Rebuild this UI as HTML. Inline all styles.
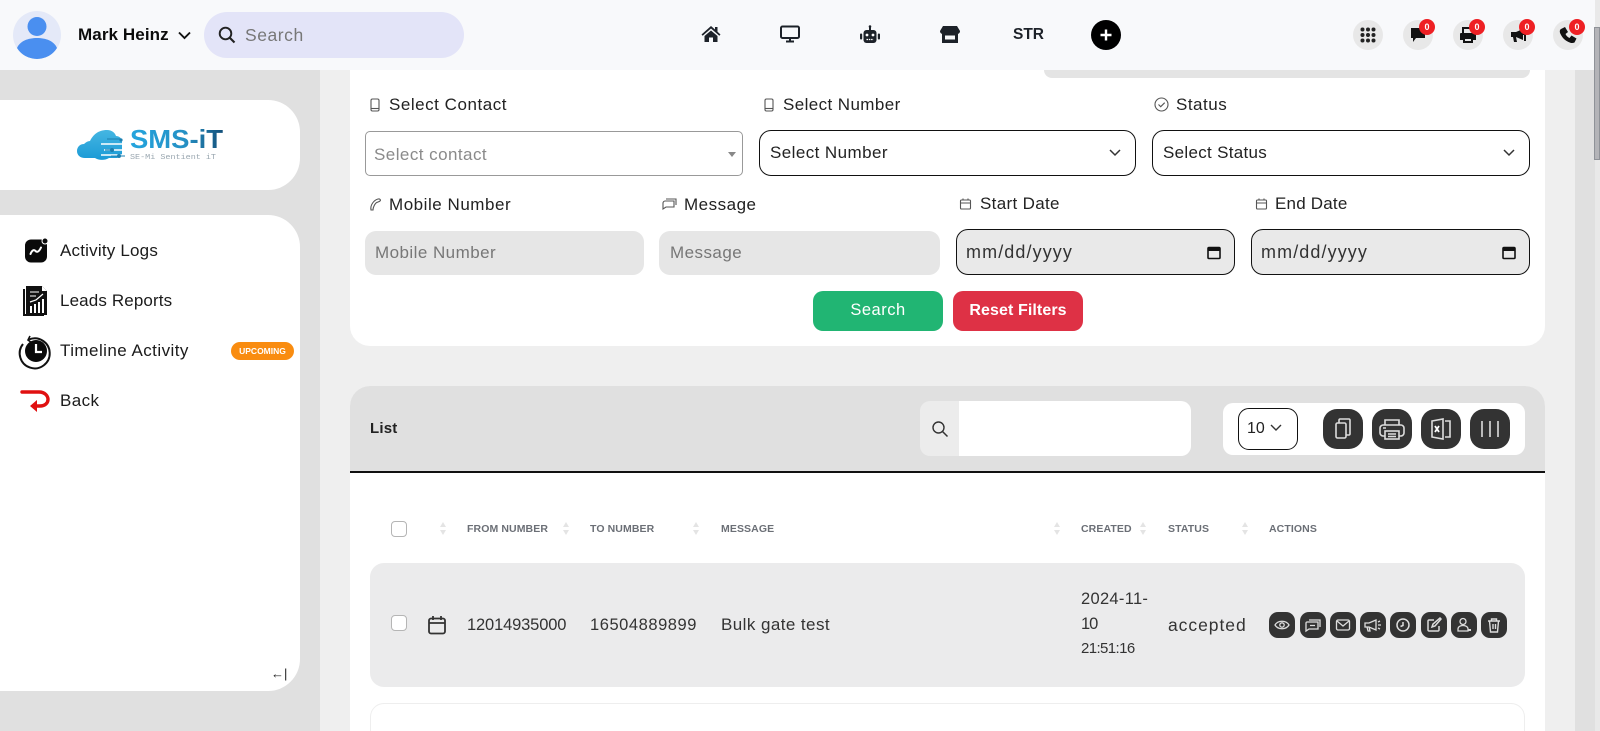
<!DOCTYPE html>
<html lang="en"><head><meta charset="utf-8"><title>Activity Logs</title>
<style>
*{box-sizing:border-box}
html,body{margin:0;padding:0;width:1600px;height:731px;overflow:hidden;background:#efefef;font-family:"Liberation Sans",sans-serif;color:#222}
body{position:relative}
.a{position:absolute}
.t{position:absolute;white-space:nowrap;line-height:20px;height:20px}
svg{display:block;overflow:visible}
.lbl{font-size:17px;letter-spacing:.5px;color:#222}
.sm{position:absolute;fill:none;stroke:#555;stroke-width:1.1}
.box{position:absolute;border:1.5px solid #111;border-radius:12px}
.fld{position:absolute;background:#e6e6e6;border-radius:11px;border:0;padding:0 10px;font:17px "Liberation Sans",sans-serif;letter-spacing:.45px;color:#777}
.fld::placeholder{color:#777;opacity:1}
.th{position:absolute;top:519px;font-size:10.5px;font-weight:bold;color:#6b6f76;line-height:20px;letter-spacing:.1px;white-space:nowrap}
.sort{position:absolute;top:521px;width:8px;height:15px}
.td{position:absolute;font-size:16.5px;color:#333;line-height:20px;white-space:nowrap}
.cb{position:absolute;width:16px;height:16px;border:1px solid #b5b5b5;border-radius:4px;background:#fff}
.tb{position:absolute;top:409px;width:40px;height:40px;background:#333;border-radius:14px}
.ab{position:absolute;top:612px;width:26px;height:26px;background:#333;border-radius:9px}
.hc{position:absolute;top:20px;width:30px;height:30px;border-radius:50%;background:#e8e8e8}
.bd{position:absolute;top:19px;width:16px;height:16px;border-radius:50%;background:#ee2024;color:#fff;font-size:9px;font-weight:bold;text-align:center;line-height:16px}
.m{position:absolute;left:60px;font-size:17px;color:#1b1b1b;line-height:20px;white-space:nowrap}
</style></head><body>

<!-- page backgrounds -->
<div class="a" style="left:0;top:70px;width:320px;height:661px;background:#e0e0e0"></div>
<div class="a" style="left:1575px;top:70px;width:20px;height:661px;background:#e0e0e0"></div>

<!-- sidebar -->
<div class="a" style="left:0;top:100px;width:300px;height:90px;background:#fff;border-radius:0 32px 32px 0"></div>
<svg class="a" style="left:77px;top:130px" width="150" height="32" viewBox="0 0 150 32">
<defs><linearGradient id="cl" x1="0" y1="0" x2="0" y2="1"><stop offset="0" stop-color="#45b6e2"/><stop offset="1" stop-color="#1b9ad6"/></linearGradient>
<linearGradient id="lg" x1="0" y1="0" x2="1" y2="0"><stop offset="0" stop-color="#25a5de"/><stop offset=".6" stop-color="#2590c4"/><stop offset="1" stop-color="#14507a"/></linearGradient></defs>
<path d="M0 21c0-4 3-7 7-7 2-2 4-3 6-3 3-6 8-11 17-11 5 0 8 3 9 6 3 0 6 2 6 6v14l-5 2H32c-5 3-11 2-14 0H8c-5 0-8-3-8-7z" fill="url(#cl)"/>
<path d="M24 14h26M27 20h23M24 25h26" stroke="#fff" stroke-width="1.400"/>
<path d="M30 9h14M28 20h6M34 26h14" stroke="#1d7fb0" stroke-width="1"/>
<circle cx="35" cy="20" r="2" fill="#1d7fb0"/><circle cx="42" cy="26" r="2" fill="#1d7fb0"/><circle cx="44" cy="10" r="1.600" fill="#1d7fb0"/>
<text x="53" y="18" font-family="Liberation Sans,sans-serif" font-weight="bold" font-size="26" fill="url(#lg)" textLength="93" lengthAdjust="spacingAndGlyphs">SMS-iT</text>
<text x="53" y="29" font-family="Liberation Mono,monospace" font-size="7" fill="#9aa7b0" textLength="86" lengthAdjust="spacingAndGlyphs">SE-Mi Sentient iT</text>
</svg>

<div class="a" style="left:0;top:215px;width:300px;height:476px;background:#fff;border-radius:0 32px 32px 0"></div>
<svg class="a" style="left:24px;top:238px" width="24" height="26" viewBox="0 0 24 26"><rect x="1" y="1.500" width="22" height="23" rx="6" fill="#0a0a0a"/><circle cx="21" cy="3" r="3" fill="#0a0a0a" stroke="#fff" stroke-width="1"/><path d="M6.500 16c2-5 4-4 5-3s3 2 5.500-3.500" fill="none" stroke="#fff" stroke-width="2" stroke-linecap="round"/></svg>
<div class="m" style="top:241px;letter-spacing:.2px">Activity Logs</div>
<svg class="a" style="left:23px;top:285px" width="26" height="32" viewBox="0 0 26 32"><path d="M1 4v26h20" fill="none" stroke="#111" stroke-width="2"/><path d="M3 1h16l5 5v24H3z" fill="#111"/><path d="M19 1v5h5" fill="#fff"/><path d="M7 7h9M7 11h6" stroke="#fff" stroke-width="1"/><path d="M7 17l6-2 7-6" fill="none" stroke="#fff" stroke-width="1.200"/><path d="M7 21h2v7H7zM11 19h2v9h-2zM15 17h2v11h-2zM19 14h2v14h-2z" fill="#fff"/></svg>
<div class="m" style="top:291px;letter-spacing:.13px">Leads Reports</div>
<svg class="a" style="left:20px;top:334px" width="32" height="34" viewBox="0 0 32 34"><path d="M9 5.500A15 15 0 1 1 3 10" fill="none" stroke="#111" stroke-width="2"/><path d="M10 2l-2 4 4 3" fill="none" stroke="#111" stroke-width="1.600"/><circle cx="16" cy="17" r="11" fill="#0a0a0a"/><path d="M16 10v8h6" fill="none" stroke="#fff" stroke-width="2.200"/></svg>
<div class="m" style="top:341px;letter-spacing:.45px">Timeline Activity</div>
<div class="a" style="left:231px;top:342px;width:63px;height:18px;border-radius:9px;background:#f98c10;color:#fff;font-size:8.500px;font-weight:bold;text-align:center;line-height:18px">UPCOMING</div>
<svg class="a" style="left:21px;top:388px" width="30" height="25" viewBox="0 0 30 25"><path d="M1 4h17c6 0 9 4 9 7.500s-3 6.500-8 6.500h-6" fill="none" stroke="#e01010" stroke-width="3.400" stroke-linecap="round"/><path d="M16 12l-7 6 7 6z" fill="#e01010"/></svg>
<div class="m" style="top:391px;letter-spacing:.4px">Back</div>
<div class="t" style="left:271px;top:664px;font-size:13px;color:#222">←|</div>

<!-- filter card -->
<div class="a" style="left:350px;top:70px;width:1195px;height:276px;background:#fff;border-radius:0 0 20px 20px"></div>
<div class="a" style="left:1044px;top:70px;width:486px;height:8px;background:#e4e4e4;border-radius:0 0 14px 14px"></div>

<svg class="sm" style="left:369px;top:98px" width="12" height="14" viewBox="0 0 12 14"><rect x="2" y="1" width="8" height="12" rx="1.500"/><path d="M2 10.500h8"/></svg>
<div class="t lbl" style="left:389px;top:95px;letter-spacing:.53px">Select Contact</div>
<svg class="sm" style="left:763px;top:98px" width="12" height="14" viewBox="0 0 12 14"><rect x="2" y="1" width="8" height="12" rx="1.500"/><path d="M2 10.500h8"/></svg>
<div class="t lbl" style="left:783px;top:95px;letter-spacing:.4px">Select Number</div>
<svg class="sm" style="left:1154px;top:97px" width="15" height="15" viewBox="0 0 15 15"><circle cx="7.500" cy="7.500" r="6.500"/><path d="M4.500 7.500l2.200 2.200 4-4"/></svg>
<div class="t lbl" style="left:1176px;top:95px">Status</div>

<div class="a" style="left:365px;top:131px;width:378px;height:45px;border:1px solid #999;border-radius:5px"></div>
<div class="t" style="left:374px;top:145px;font-size:17px;letter-spacing:.45px;color:#8a8a8a">Select contact</div>
<div class="a" style="left:728px;top:152px;width:0;height:0;border-left:4px solid transparent;border-right:4px solid transparent;border-top:5px solid #888"></div>

<div class="box" style="left:759px;top:130px;width:377px;height:46px"></div>
<div class="t" style="left:770px;top:143px;font-size:17px;letter-spacing:.42px;color:#222">Select Number</div>
<svg class="a" style="left:1108px;top:148px" width="14" height="10" viewBox="0 0 14 10"><path d="M2 2l5 5 5-5" fill="none" stroke="#333" stroke-width="1.500"/></svg>
<div class="box" style="left:1152px;top:130px;width:378px;height:46px"></div>
<div class="t" style="left:1163px;top:143px;font-size:17px;letter-spacing:.3px;color:#222">Select Status</div>
<svg class="a" style="left:1502px;top:148px" width="14" height="10" viewBox="0 0 14 10"><path d="M2 2l5 5 5-5" fill="none" stroke="#333" stroke-width="1.500"/></svg>

<svg class="sm" style="left:369px;top:198px" width="13" height="13" viewBox="0 0 13 13"><path d="M2 12C1 7 5 2 9 1c2-.500 3 1 2 2S8 4 7 5 4 9 4 12z"/></svg>
<div class="t lbl" style="left:389px;top:195px;letter-spacing:.53px">Mobile Number</div>
<svg class="sm" style="left:662px;top:198px" width="15" height="13" viewBox="0 0 15 13"><path d="M3 3h9v6H4l-3 2V5c0-1 1-2 2-2z"/><path d="M4 1h10v6"/></svg>
<div class="t lbl" style="left:684px;top:195px">Message</div>
<svg class="sm" style="left:960px;top:198px" width="11" height="12" viewBox="0 0 11 12"><rect x=".5" y="2" width="10" height="9" rx="1"/><path d="M.5 5h10M3 .500v2M8 .500v2"/></svg>
<div class="t lbl" style="left:980px;top:194px;letter-spacing:.33px">Start Date</div>
<svg class="sm" style="left:1256px;top:198px" width="11" height="12" viewBox="0 0 11 12"><rect x=".5" y="2" width="10" height="9" rx="1"/><path d="M.5 5h10M3 .500v2M8 .500v2"/></svg>
<div class="t lbl" style="left:1275px;top:194px;letter-spacing:.2px">End Date</div>

<input class="fld" style="left:365px;top:231px;width:279px;height:44px" placeholder="Mobile Number">
<input class="fld" style="left:659px;top:231px;width:281px;height:44px;padding-left:11px" placeholder="Message">

<div class="box" style="left:956px;top:229px;width:279px;height:46px;background:#e9e9e9"></div>
<div class="t" style="left:966px;top:242px;font-size:18px;letter-spacing:1.100px;color:#333">mm/dd/yyyy</div>
<svg class="a" style="left:1206px;top:245px" width="16" height="16" viewBox="0 0 16 16"><rect x="2" y="2.500" width="12" height="11" rx="1" fill="none" stroke="#111" stroke-width="1.600"/><path d="M2 3h12v3H2z" fill="#111"/></svg>
<div class="box" style="left:1251px;top:229px;width:279px;height:46px;background:#e9e9e9"></div>
<div class="t" style="left:1261px;top:242px;font-size:18px;letter-spacing:1.100px;color:#333">mm/dd/yyyy</div>
<svg class="a" style="left:1501px;top:245px" width="16" height="16" viewBox="0 0 16 16"><rect x="2" y="2.500" width="12" height="11" rx="1" fill="none" stroke="#111" stroke-width="1.600"/><path d="M2 3h12v3H2z" fill="#111"/></svg>

<div class="a" style="left:813px;top:291px;width:130px;height:40px;background:#21b573;border-radius:10px;color:#fff;text-align:center;line-height:39px;font-size:16.500px;letter-spacing:.5px">Search</div>
<div class="a" style="left:953px;top:291px;width:130px;height:40px;background:#de3145;border-radius:10px;color:#fff;text-align:center;line-height:39px;font-size:16px;font-weight:bold;letter-spacing:.1px">Reset Filters</div>

<!-- list card -->
<div class="a" style="left:350px;top:386px;width:1195px;height:345px;background:#fff;border-radius:20px 20px 0 0"></div>
<div class="a" style="left:350px;top:386px;width:1195px;height:87px;background:#e0e0e0;border-radius:20px 20px 0 0;border-bottom:2px solid #111"></div>
<div class="t" style="left:370px;top:419px;font-size:15px;font-weight:bold;letter-spacing:.2px;color:#222">List</div>
<div class="a" style="left:959px;top:401px;width:232px;height:55px;background:#fff;border-radius:0 10px 10px 0"></div>
<div class="a" style="left:920px;top:401px;width:39px;height:55px;background:#ececec;border-radius:10px 0 0 10px"></div>
<svg class="a" style="left:931px;top:420px" width="18" height="18" viewBox="0 0 18 18"><circle cx="7.500" cy="7.500" r="5.500" fill="none" stroke="#333" stroke-width="1.400"/><path d="M11.500 11.500l5 5" stroke="#333" stroke-width="1.500"/></svg>

<div class="a" style="left:1223px;top:403px;width:302px;height:52px;background:#fff;border-radius:10px"></div>
<div class="box" style="left:1238px;top:408px;width:60px;height:42px;border-width:1px;border-radius:11px"></div>
<div class="t" style="left:1247px;top:419px;font-size:16px;color:#222">10</div>
<svg class="a" style="left:1270px;top:424px" width="12" height="8" viewBox="0 0 12 8"><path d="M1 1l5 5 5-5" fill="none" stroke="#333" stroke-width="1.400"/></svg>
<div class="tb" style="left:1323px"><svg width="40" height="40" viewBox="0 0 40 40" fill="none" stroke="#ddd" stroke-width="1.600"><rect x="13" y="14" width="10" height="15" rx="1.500"/><path d="M16 14v-3c0-.5.500-1 1-1h9c.5 0 1 .5 1 1v14c0 .5-.5 1-1 1h-3"/></svg></div>
<div class="tb" style="left:1372px"><svg width="40" height="40" viewBox="0 0 40 40" fill="none" stroke="#ddd" stroke-width="1.600"><path d="M13 16v-5h14v5"/><path d="M13 27h-2c-1 0-3-1-3-3v-5c0-2 2-3 3-3h18c1 0 3 1 3 3v5c0 2-2 3-3 3h-2"/><rect x="13" y="22" width="14" height="8"/><path d="M16 25h8M16 27.500h8M11 19h3"/></svg></div>
<div class="tb" style="left:1421px"><svg width="40" height="40" viewBox="0 0 40 40" fill="none" stroke="#ddd" stroke-width="1.600"><path d="M11 12l11-2v20l-11-2z"/><path d="M24 12h5v16h-5"/><path d="M14 17l4 6M18 17l-4 6" stroke="#fff" stroke-width="1.800"/></svg></div>
<div class="tb" style="left:1470px"><svg width="40" height="40" viewBox="0 0 40 40" fill="none" stroke="#ddd" stroke-width="1.600"><path d="M12 12v16M20 12v16M28 12v16"/></svg></div>

<!-- table head -->
<div class="cb" style="left:391px;top:521px"></div>
<svg class="sort" style="left:439px" viewBox="0 0 8 15"><path d="M4 1l3 5H1zM4 14l3-5H1z" fill="#e4e4e4"/></svg>
<div class="th" style="left:467px">FROM NUMBER</div>
<svg class="sort" style="left:562px" viewBox="0 0 8 15"><path d="M4 1l3 5H1zM4 14l3-5H1z" fill="#e4e4e4"/></svg>
<div class="th" style="left:590px">TO NUMBER</div>
<svg class="sort" style="left:692px" viewBox="0 0 8 15"><path d="M4 1l3 5H1zM4 14l3-5H1z" fill="#e4e4e4"/></svg>
<div class="th" style="left:721px">MESSAGE</div>
<svg class="sort" style="left:1053px" viewBox="0 0 8 15"><path d="M4 1l3 5H1zM4 14l3-5H1z" fill="#e4e4e4"/></svg>
<div class="th" style="left:1081px">CREATED</div>
<svg class="sort" style="left:1139px" viewBox="0 0 8 15"><path d="M4 1l3 5H1zM4 14l3-5H1z" fill="#e4e4e4"/></svg>
<div class="th" style="left:1168px">STATUS</div>
<svg class="sort" style="left:1241px" viewBox="0 0 8 15"><path d="M4 1l3 5H1zM4 14l3-5H1z" fill="#e4e4e4"/></svg>
<div class="th" style="left:1269px">ACTIONS</div>

<!-- row -->
<div class="a" style="left:370px;top:563px;width:1155px;height:124px;background:#ebebec;border-radius:14px"></div>
<div class="a" style="left:370px;top:703px;width:1155px;height:60px;background:#fff;border:1px solid #eee;border-radius:14px"></div>
<div class="cb" style="left:391px;top:615px"></div>
<svg class="a" style="left:427px;top:615px" width="20" height="20" viewBox="0 0 20 20" fill="none" stroke="#333" stroke-width="1.800"><rect x="2" y="3.500" width="16" height="15" rx="2"/><path d="M2 8h16M6 1v4M14 1v4"/></svg>
<div class="td" style="left:467px;top:615px;letter-spacing:-.15px">12014935000</div>
<div class="td" style="left:590px;top:615px;letter-spacing:.55px">16504889899</div>
<div class="td" style="left:721px;top:615px;font-size:17px;letter-spacing:.43px">Bulk gate test</div>
<div class="td" style="left:1081px;top:589px;letter-spacing:.3px">2024-11-</div>
<div class="td" style="left:1081px;top:614px;letter-spacing:-1px">10</div>
<div class="td" style="left:1081px;top:639px;font-size:15px;letter-spacing:-.6px">21:51:16</div>
<div class="td" style="left:1168px;top:615px;font-size:17.500px;letter-spacing:.95px">accepted</div>

<div class="ab" style="left:1269px"><svg width="26" height="26" viewBox="0 0 26 26" fill="none" stroke="#ddd" stroke-width="1.300"><path d="M6 13c3-5 11-5 14 0-3 5-11 5-14 0z"/><circle cx="13" cy="13" r="2.200"/></svg></div>
<div class="ab" style="left:1300px"><svg width="26" height="26" viewBox="0 0 26 26" fill="none" stroke="#ddd" stroke-width="1.300"><path d="M7 10h11v7H9l-3 2v-8c0-.5.500-1 1-1z"/><path d="M9 8h11v7M10 13.500h5"/></svg></div>
<div class="ab" style="left:1330px"><svg width="26" height="26" viewBox="0 0 26 26" fill="none" stroke="#ddd" stroke-width="1.300"><rect x="6.500" y="8" width="13" height="10" rx="1.500"/><path d="M7 9l6 5 6-5"/></svg></div>
<div class="ab" style="left:1360px"><svg width="26" height="26" viewBox="0 0 26 26" fill="none" stroke="#ddd" stroke-width="1.300"><path d="M5 11h4l7-3v10l-7-3H5zM7 15l1 4h2l-1-4"/><path d="M18 10l2-1M18 13h3M18 16l2 1"/></svg></div>
<div class="ab" style="left:1390px"><svg width="26" height="26" viewBox="0 0 26 26" fill="none" stroke="#ddd" stroke-width="1.500"><circle cx="13" cy="13" r="6"/><path d="M13 10v3.500l-2.500 1"/></svg></div>
<div class="ab" style="left:1421px"><svg width="26" height="26" viewBox="0 0 26 26" fill="none" stroke="#ddd" stroke-width="1.500"><path d="M18 14v4c0 .5-.5 1-1 1H8c-.5 0-1-.5-1-1V9c0-.5.500-1 1-1h5"/><path d="M11 15l1-3 7-6 1 1-6 7z"/></svg></div>
<div class="ab" style="left:1451px"><svg width="26" height="26" viewBox="0 0 26 26" fill="none" stroke="#ddd" stroke-width="1.300"><circle cx="12" cy="9.500" r="3"/><path d="M7 19v-2c0-2 2-3.500 5-3.500s5 1.500 5 3.500v2z"/><path d="M17 18h3" stroke-width="2"/></svg></div>
<div class="ab" style="left:1481px"><svg width="26" height="26" viewBox="0 0 26 26" fill="none" stroke="#ddd" stroke-width="1.400"><path d="M7 9h12M10.500 9V7h5v2M8.500 9l1 11h7l1-11M12 12v5M14.500 12v5"/></svg></div>

<!-- header -->
<div class="a" style="left:0;top:0;width:1600px;height:70px;background:#f8f9fb"></div>
<svg class="a" style="left:13px;top:11px" width="48" height="48" viewBox="0 0 48 48"><defs><clipPath id="av"><circle cx="24" cy="24" r="24"/></clipPath></defs><circle cx="24" cy="24" r="24" fill="#e4e9f8"/><circle cx="24" cy="15.500" r="9.500" fill="#4a8ff0"/><path d="M4 37c3-7 11-10 20-10s17 3 20 10c-4 7-11 11-20 11S8 44 4 37z" fill="#4a8ff0" clip-path="url(#av)"/></svg>
<div class="t" style="left:78px;top:25px;font-size:17px;font-weight:bold;color:#0c0c0c;letter-spacing:.1px">Mark Heinz</div>
<svg class="a" style="left:177px;top:30px" width="15" height="11" viewBox="0 0 15 11"><path d="M2 2.500l5.500 5.500L13 2.500" fill="none" stroke="#111" stroke-width="1.900"/></svg>
<div class="a" style="left:204px;top:12px;width:260px;height:46px;background:#e3e4f8;border-radius:23px"></div>
<svg class="a" style="left:218px;top:26px" width="18" height="18" viewBox="0 0 18 18"><circle cx="7.500" cy="7.500" r="5.800" fill="none" stroke="#222" stroke-width="1.900"/><path d="M11.500 11.500l5 5" stroke="#222" stroke-width="2.100"/></svg>
<div class="t" style="left:245px;top:25px;font-size:17.500px;letter-spacing:.55px;color:#777">Search</div>

<svg class="a" style="left:701px;top:25px" width="20" height="18" viewBox="0 0 20 18"><path d="M10 1L0.500 9.500l1.200 1.300L10 3.500l8.300 7.300 1.200-1.300-3-2.700V2h-2.500v2.500z" fill="#1d2229"/><path d="M3.500 11L10 5.500l6.500 5.500v6H12v-4.500H8V17H3.500z" fill="#1d2229"/></svg>
<svg class="a" style="left:780px;top:25px" width="20" height="18" viewBox="0 0 20 18"><rect x="1" y="1.500" width="18" height="11.500" rx="1.500" fill="none" stroke="#1d2229" stroke-width="2"/><path d="M6 16.500h8M10 13v3" stroke="#1d2229" stroke-width="2"/></svg>
<svg class="a" style="left:860px;top:25px" width="20" height="19" viewBox="0 0 20 19"><rect x="3.500" y="5" width="13" height="13" rx="3" fill="#1d2229"/><path d="M10 1v4" stroke="#1d2229" stroke-width="2"/><circle cx="10" cy="1.500" r="1.300" fill="#1d2229"/><rect x="0" y="8.500" width="2.200" height="6" rx="1" fill="#1d2229"/><rect x="17.800" y="8.500" width="2.200" height="6" rx="1" fill="#1d2229"/><circle cx="7" cy="10" r="1.400" fill="#fff"/><circle cx="13" cy="10" r="1.400" fill="#fff"/><path d="M6.500 14.500h7" stroke="#fff" stroke-width="1.300" stroke-dasharray="1.500 .8"/></svg>
<svg class="a" style="left:940px;top:26px" width="20" height="17" viewBox="0 0 20 17"><path d="M3 0h14l3 5c0 2-1.500 3-3 3H3C1.500 8 0 7 0 5z" fill="#1d2229"/><path d="M2 8h16v9H2z" fill="#1d2229"/><path d="M5 9.500h10v4H5z" fill="#f8f9fb"/></svg>
<div class="t" style="left:1013px;top:25px;font-size:15.500px;font-weight:bold;color:#1d2229;letter-spacing:0">STR</div>
<div class="a" style="left:1091px;top:20px;width:30px;height:30px;border-radius:50%;background:#000"></div>
<svg class="a" style="left:1098px;top:27px" width="16" height="16" viewBox="0 0 16 16"><path d="M8 2.500v11M2.500 8h11" stroke="#fff" stroke-width="2.400"/></svg>

<div class="hc" style="left:1353px"><svg width="30" height="30" viewBox="0 0 30 30" fill="#222"><circle cx="9.500" cy="9.500" r="2"/><circle cx="15" cy="9.500" r="2"/><circle cx="20.500" cy="9.500" r="2"/><circle cx="9.500" cy="15" r="2"/><circle cx="15" cy="15" r="2"/><circle cx="20.500" cy="15" r="2"/><circle cx="9.500" cy="20.500" r="2"/><circle cx="15" cy="20.500" r="2"/><circle cx="20.500" cy="20.500" r="2"/></svg></div>
<div class="hc" style="left:1403px"><svg width="30" height="30" viewBox="0 0 30 30"><path d="M8 8h14v10H13l-3 4v-4H8z" fill="#111"/></svg></div>
<div class="bd" style="left:1419px">0</div>
<div class="hc" style="left:1453px"><svg width="30" height="30" viewBox="0 0 30 30"><path d="M10 13V8h10v5" fill="none" stroke="#111" stroke-width="2"/><path d="M8 13h14c.6 0 1 .4 1 1v6h-3v-3H10v3H7v-6c0-.6.400-1 1-1z" fill="#111"/><rect x="11" y="18" width="8" height="4" fill="none" stroke="#111" stroke-width="2"/></svg></div>
<div class="bd" style="left:1469px">0</div>
<div class="hc" style="left:1503px"><svg width="30" height="30" viewBox="0 0 30 30"><path d="M8 12h5l7-3v11l-7-3H8z" fill="#111"/><path d="M10 17l1 5h3l-1-5z" fill="#111"/><path d="M16 14h6v7" fill="none" stroke="#111" stroke-width="2"/></svg></div>
<div class="bd" style="left:1519px">0</div>
<div class="hc" style="left:1553px"><svg width="30" height="30" viewBox="0 0 30 30"><path d="M8 9l4-2 3 5-2.500 2c1 2 2 3 4 4l2-2.500 5 3-2 4c-2 1-4 .5-6-.5-4-2-6-4-8-8-1-2-1-4 .5-5z" fill="#111"/></svg></div>
<div class="bd" style="left:1569px">0</div>

<!-- scrollbar -->
<div class="a" style="left:1595px;top:0;width:5px;height:731px;background:#e9e9e9"></div>
<div class="a" style="left:1594px;top:27px;width:6px;height:133px;background:#b4b4b8;border:1px solid #8f9298"></div>
</body></html>
